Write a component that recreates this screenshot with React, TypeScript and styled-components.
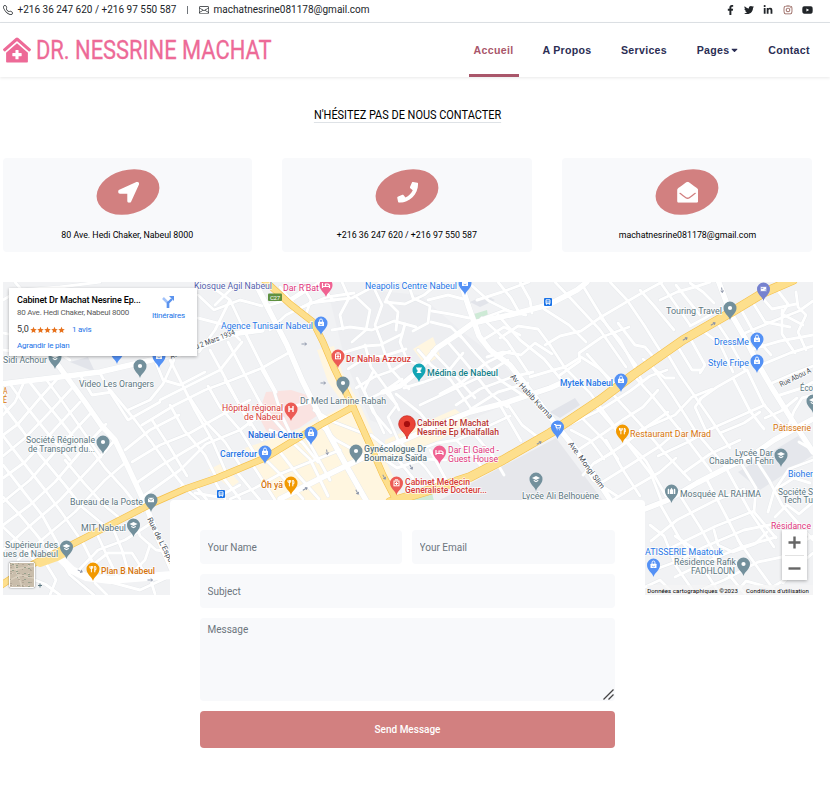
import React from 'react';
import styled, { createGlobalStyle } from 'styled-components';
import {
  FaClinicMedical, FaFacebookF, FaTwitter, FaLinkedinIn, FaInstagram, FaYoutube,
  FaLocationArrow, FaPhone, FaEnvelopeOpen, FaCaretDown,
} from 'react-icons/fa';
import { BsTelephone, BsEnvelope } from 'react-icons/bs';

const GlobalStyle = createGlobalStyle`
  * { box-sizing: border-box; }
  body { margin: 0; background: #fff; font-family: Roboto, sans-serif; color: #212529; overflow-x: hidden; }
`;

const Page = styled.div`
  width: 830px;
  height: 808px;
  overflow: hidden;
`;

const TopBar = styled.div`
  height: 23px;
  border-bottom: 1px solid #dee2e6;
  display: flex;
  align-items: center;
  justify-content: space-between;
  padding: 0 17px 3px 3px;
  font-size: 10px;
  line-height: 16px;
`;
const ContactLine = styled.div`
  display: flex;
  align-items: center;
  white-space: nowrap;
  svg { width: 10px; height: 10px; }
`;
const ContactText = styled.span<{ $w: number; $gap: number }>`
  width: ${p => p.$w}px;
  margin-left: ${p => p.$gap}px;
`;
const Divider = styled.span`
  width: 1px;
  height: 8px;
  background: #70757a;
  margin: 0 11px 0 10px;
`;
const Socials = styled.div`
  display: flex;
  align-items: center;
  gap: 9.5px;
  svg { height: 10px; width: 10px; display: block; }
  svg:first-child { width: 7px; }
  svg:last-child { width: 11px; }
  svg:nth-child(4) { color: #8a524a; }
`;

const NavBar = styled.header`
  height: 54px;
  display: flex;
  justify-content: space-between;
  padding-left: 3px;
  padding-right: 14.5px;
  box-shadow: 0 1px 3px rgba(0, 0, 0, 0.09);
`;
const Brand = styled.div`
  display: flex;
  align-items: center;
  color: #ed6a97;
  svg { width: 28px; height: 26px; flex: none; }
`;
const BrandName = styled.span`
  font-size: 26px;
  line-height: 32px;
  margin-left: 5px;
  white-space: nowrap;
  transform: scaleX(0.842);
  transform-origin: 0 50%;
  -webkit-text-stroke: 0.3px #ed6a97;
`;
const Nav = styled.nav`
  display: flex;
  gap: 19px;
`;
const NavItem = styled.a<{ $active?: boolean; $w: number }>`
  width: ${p => p.$w}px;
  display: flex;
  align-items: center;
  justify-content: center;
  gap: 2px;
  font: 700 10.6px 'Liberation Sans', sans-serif;
  letter-spacing: 0.3px;
  color: ${p => (p.$active ? '#a9566a' : '#2b2e54')};
  border-bottom: 3px solid ${p => (p.$active ? '#a9566a' : 'transparent')};
  padding-top: 3px;
  white-space: nowrap;
  svg { width: 7px; height: 10px; }
`;

const Title = styled.h1`
  margin: 29px 14px 0 0;
  display: flex;
  justify-content: center;
  font-weight: 400;
  color: #000;
  font-size: 12.8px;
  line-height: 17px;
  height: 52px;
`;
const TitleText = styled.span`
  display: inline-block;
  height: 17px;
  transform: scaleX(0.855);
  border-bottom: 1px solid #dee2e6;
  white-space: nowrap;
`;

const Main = styled.main`
  width: 813px;
  padding-left: 3px;
`;
const Cards = styled.div`
  display: grid;
  grid-template-columns: 249px 250px 250px;
  gap: 30px;
`;
const Card = styled.div`
  height: 94px;
  background: #f8f9fb;
  border-radius: 4px;
  display: flex;
  flex-direction: column;
  align-items: center;
  padding-top: 12px;
`;
const Blob = styled.div`
  width: 64px;
  height: 44px;
  border-radius: 50%;
  background: #d28080;
  transform: rotate(-15deg);
  display: flex;
  align-items: center;
  justify-content: center;
  color: #fff;
  svg { width: 21px; height: 21px; transform: rotate(15deg); }
`;
const CardText = styled.span`
  margin-top: 13px;
  font-size: 9.8px;
  line-height: 16px;
  color: #000;
  white-space: nowrap;
  transform: scaleX(0.9);
`;

const MapFrame = styled.div`
  position: relative;
  margin-top: 30px;
  width: 810px;
  height: 313px;
  overflow: hidden;
  & > svg { display: block; }
`;
const InfoCard = styled.div`
  position: absolute;
  left: 6px;
  top: 6px;
  width: 188px;
  height: 68px;
  background: #fff;
  box-shadow: 0 1px 3px rgba(0, 0, 0, 0.3);
  display: flex;
  justify-content: space-between;
  padding: 5px 12px 0 8px;
  white-space: nowrap;
`;
const InfoMain = styled.div`
  display: flex;
  flex-direction: column;
`;
const PlaceName = styled.div`
  font-size: 9px;
  line-height: 14px;
  color: #000;
  font-weight: 500;
  letter-spacing: -0.14px;
`;
const Address = styled.div`
  font-size: 8px;
  line-height: 11px;
  color: #5b5b5b;
  letter-spacing: -0.24px;
`;
const Rating = styled.div`
  display: flex;
  align-items: center;
  margin-top: 5px;
  font-size: 9px;
  line-height: 13px;
  color: #333;
`;
const Stars = styled.span`
  color: #e7711b;
  display: flex;
  margin: 0 7px 0 1px;
  svg { width: 7px; height: 8px; }
`;
const MapLink = styled.a`
  font-size: 8px;
  line-height: 11px;
  letter-spacing: -0.2px;
  color: #1a73e8;
`;
const Enlarge = styled(MapLink)`
  margin-top: 4px;
`;
const Directions = styled.div`
  display: flex;
  flex-direction: column;
  align-items: center;
  padding-top: 2px;
  svg { width: 14px; height: 14px; margin-bottom: 1px; }
`;
const Thumb = styled.div`
  position: absolute;
  left: 6px;
  bottom: 7px;
  width: 26px;
  height: 26px;
  border: 1.5px solid #fff;
  border-radius: 2px;
  box-shadow: 0 0 2px rgba(0, 0, 0, 0.5);
  overflow: hidden;
  background: #c4b8a5;
  svg { display: block; }
`;
const ZoomBox = styled.div`
  position: absolute;
  right: 6px;
  bottom: 15px;
  width: 25px;
  height: 50px;
  background: #fff;
  box-shadow: 0 1px 3px rgba(0, 0, 0, 0.3);
  display: flex;
  flex-direction: column;
  align-items: center;
  justify-content: center;
  gap: 6px;
  svg { width: 13px; height: 13px; }
`;
const ZoomLine = styled.div`
  width: 19px;
  height: 1px;
  background: #e2e2e2;
`;
const Credits = styled.div`
  position: absolute;
  right: 0;
  bottom: 0;
  height: 10px;
  display: flex;
  align-items: center;
  gap: 8px;
  padding-right: 4px;
  font-size: 6px;
  letter-spacing: 0.09px;
  color: #000;
  background: rgba(245, 245, 245, 0.7);
  white-space: nowrap;
`;

const Form = styled.form`
  position: relative;
  width: 475px;
  height: 278px;
  margin: -95px 0 0 167px;
  padding: 30px;
  background: #fff;
  border-radius: 4px;
  display: grid;
  grid-template-columns: 202px 203px;
  grid-template-rows: 34px 34px 83px 37px;
  gap: 10px;
`;
const Field = styled.input<{ $wide?: boolean }>`
  grid-column: ${p => (p.$wide ? '1 / -1' : 'auto')};
  width: 100%;
  border: 0;
  border-radius: 4px;
  background: #f8f9fb;
  padding: ${p => (p.$wide ? '1px 7.5px 0' : '0 7.5px')};
  font: 400 10px Roboto, sans-serif;
  &::placeholder { color: #6c757d; opacity: 1; }
`;
const MessageBox = styled.div`
  grid-column: 1 / -1;
  position: relative;
`;
const Message = styled.textarea`
  display: block;
  width: 100%;
  height: 83px;
  border: 0;
  border-radius: 4px;
  background: #f8f9fb;
  padding: 4px 7.5px;
  font: 400 10px/15px Roboto, sans-serif;
  resize: none;
  &::placeholder { color: #6c757d; opacity: 1; }
`;
const Grip = styled.svg`
  position: absolute;
  right: 1px;
  bottom: 1px;
`;
const Send = styled.button`
  grid-column: 1 / -1;
  border: 0;
  border-radius: 4px;
  background: #d28080;
  color: #fff;
  font: 500 10px Roboto, sans-serif;
`;

/* Streets, in the map's own coordinate space (x 3-813, y 282-595). */
const MAJOR = [
  '0,384 60,377 100,372 160,358 200,347 232,334 262,330',
  '53,358 66,376 85,402 101,425 115,440 128,467 147,508 158,538 172,570',
  '255,282 270,312 287,345 302,380 313,402 330,436 347,467 367,502',
  '460,280 468,305 479,336 490,350 510,365 532,393 557,426 575,448 600,484 618,512',
  '587,282 577,290 548,305 510,315 473,323 455,336 437,348 418,371 400,386 383,392',
  '718,280 730,312 745,338 757,362 772,388 792,420 813,452',
  '568,380 550,388 505,403 470,412 440,424 413,436 375,452 323,477 280,499',
  '645,509 668,500 697,483 730,466 750,457 774,440 813,419',
];
const MINOR = [
  '3,300 20,290 60,287 100,282', '3,350 25,352 55,359', '15,282 30,300 60,310', '3,333 40,340 70,360',
  '198,295 214,310 240,300 262,306', '205,282 230,300 246,334', '198,318 225,325 240,340', '240,282 228,292 215,305',
  '199,352 215,330 230,300', '170,360 195,410 212,440 225,470', '155,360 163,380 180,385 205,372', '160,400 196,382 220,370 242,342',
  '142,425 175,405 205,390 232,380 262,368 290,352', '210,350 222,372 250,425', '228,342 245,375 262,406 285,432',
  '245,332 262,366 276,392', '128,410 150,400 163,384 174,360', '100,373 112,395 128,420 160,402', '80,375 92,395 112,392',
  '3,415 15,402 25,380', '10,384 25,405 45,430 70,460', '28,380 42,398 60,420 85,452', '45,378 60,398 78,424 101,457',
  '3,435 18,424 40,398 58,378', '3,456 25,438 48,414 72,388', '3,478 25,462 54,430 80,402', '3,502 30,480 60,446 90,414',
  '3,525 30,505 55,482 82,450 106,424', '3,550 25,530 60,500 92,466 115,440', '18,560 45,537 75,512 105,480 125,463',
  '3,405 22,430 40,455 65,485 82,507 105,526', '3,436 20,458 45,490 62,513 78,536', '3,465 24,492 42,515 58,544',
  '3,497 20,515 36,534 50,552', '3,527 20,543 35,561', '65,460 84,483 105,506 122,520', '88,445 105,468 125,490 142,512',
  '40,562 56,544', '82,541 95,567 108,578', '96,532 109,560 119,580', '112,526 122,550 130,578', '75,574 98,550 125,540 150,524',
  '90,567 108,553 132,553 143,570', '134,518 140,536 156,550 170,552', '128,577 145,560 150,545', '3,584 25,576 45,584 60,595',
  '60,558 70,575 94,595', '45,562 56,580 50,595', '95,583 107,595', '150,578 155,594', '110,582 140,590 166,578',
  '110,390 135,420 150,440 175,475 187,490', '132,462 160,445 190,433 225,413 250,400', '145,495 180,470 206,444 240,430 265,411',
  '125,450 150,430 179,415', '135,484 162,465 187,450 210,437', '170,405 184,430 205,455 216,477', '190,398 205,421 225,442 240,465',
  '208,386 220,407 240,430 255,454', '152,420 169,446 187,476', '225,380 243,411 262,440', '262,370 274,391 280,410 310,402',
  '172,497 182,486 199,500', '196,487 207,500', '214,480 225,499', '222,476 240,499', '236,471 260,500', '252,464 275,500',
  '195,493 218,497 240,485', '230,499 255,488 280,474 320,458 340,450', '264,458 280,474 303,499', '280,452 297,474 319,499',
  '294,444 310,459 328,496', '306,437 330,480', '270,330 286,315 310,303 335,300', '280,287 298,309 327,297 354,293',
  '270,305 292,298 310,286', '287,303 306,291 320,282', '300,282 311,300 306,314', '318,283 333,300 352,298 367,290 382,282',
  '342,282 349,298 340,315 343,329', '355,296 370,310 366,330 352,342', '332,330 350,327 372,330 394,321 416,327',
  '373,286 382,305 375,325 382,343', '395,282 386,300 398,312 396,330', '385,302 405,304 424,295 440,282',
  '408,283 413,298 430,306 428,323 413,331', '428,300 448,295 463,299', '432,311 450,314 469,318', '431,322 451,327 461,337',
  '405,324 400,342 407,360 424,367', '342,353 365,346 380,345 402,334', '348,369 365,358 384,356 406,349', '356,388 374,377 391,371 409,360',
  '361,403 383,392 402,379', '365,345 371,367 390,393 399,410', '382,345 390,368 409,389', '373,372 364,390 373,412 391,433',
  '357,378 369,401 384,433', '384,390 397,405 388,417 398,440', '396,394 420,413 438,435', '404,388 424,382 446,374 463,353',
  '418,350 431,365 450,379 472,410', '432,351 449,369 475,398', '446,340 465,362 490,393 507,407', '459,334 476,354 500,380 524,396',
  '440,394 462,382 486,363 510,351', '420,405 452,390 482,376 508,360', '456,405 480,389 512,377 533,372', '471,409 498,392 528,383',
  '487,357 503,352 521,355 535,343 552,354', '500,338 518,326 538,329 550,345', '481,341 504,327 520,335', '481,319 505,310 526,315',
  '498,282 511,298 520,314', '520,282 530,300 532,313', '482,318 507,341 529,374', '498,315 520,340 544,359 563,382',
  '470,284 489,301 509,311', '477,300 502,292 529,282', '544,309 569,325 586,342', '555,282 575,303 600,330 626,367',
  '583,286 608,327 636,365', '560,375 580,361 579,353 602,337 629,327', '545,345 560,336 581,331 601,317 640,294 662,282',
  '530,377 550,371 565,367 581,357 600,369 618,390', '550,345 565,368 590,393 613,424', '587,354 602,371 620,389',
  '610,282 627,300 644,325 661,352', '640,290 655,307 674,330', '618,323 635,345 645,347 656,360', '600,317 620,340 642,381',
  '643,359 665,378 674,378', '660,282 674,302 690,325', '660,300 677,292 695,287 710,282', '676,285 687,299 700,315',
  '690,283 703,292 714,303', '690,326 705,318 719,309', '667,353 680,375 710,418 730,448', '678,347 692,370 702,370',
  '690,338 705,365 700,373', '702,330 720,344 733,372', '718,324 728,339 745,370', '738,304 758,340 771,355',
  '750,298 765,322 790,327', '758,293 772,309 796,304', '775,287 788,304 782,314 803,325', '745,333 771,322 799,311 813,301',
  '753,349 780,341 813,335', '761,365 790,353 813,346', '772,383 795,373 813,366', '780,395 802,388 813,382',
  '796,292 798,307 806,315 798,332 806,350', '782,310 782,334 795,353', '700,399 717,387 747,370', '701,399 695,407 706,431 740,416 765,405',
  '733,378 750,411 764,429', '747,370 764,405 787,430', '765,418 781,411 797,398', '787,430 794,411 802,398 813,395',
  '720,433 744,423 760,412', '658,456 688,442 713,428', '683,473 710,454 740,440', '640,430 675,415 692,397 712,389',
  '558,430 600,410 630,391 650,376 667,370', '580,416 603,439 618,459', '592,402 618,432 646,461 666,496',
  '609,390 641,425 662,450 690,480', '635,377 653,397 683,434 711,471', '650,364 671,393 696,432 725,466',
  '575,452 604,433 624,419 643,407 658,390', '595,463 620,447 648,426 668,412', '601,483 625,468 660,446 680,429',
  '613,500 636,486 660,472 676,458', '578,455 593,480 617,496', '606,440 623,470 640,496', '621,435 651,474 661,500',
  '571,430 590,440 604,459', '583,475 594,463 612,453', '660,504 680,539 692,555', '681,497 700,527 715,554',
  '707,480 725,514 742,547', '726,468 749,510 774,547', '741,463 756,488 754,512 776,538', '754,457 769,480 782,505 813,540',
  '651,541 677,520 714,501 744,489', '660,553 685,541 716,526 754,511', '651,571 678,561 704,547 744,530 774,524',
  '675,577 704,563 739,548 776,537', '691,594 724,580 758,562 782,557', '675,536 693,548 703,568 720,594',
  '711,553 730,576 745,594', '738,540 758,568 774,590', '714,530 718,545 733,552 755,544 767,532', '650,525 664,536 676,566 696,595',
  '775,517 787,505 799,514 813,502', '778,488 794,478 810,483', '768,512 774,491 789,469 813,460', '799,442 813,450',
  '782,557 797,545 813,536', '783,583 801,563 813,553', '645,587 660,580 675,595', '734,595 746,581 771,588 786,579',
  '475,435 493,456 504,475', '457,441 473,456 484,470', '430,450 450,487', '500,405 521,441', '507,403 522,425 539,438',
  '418,450 437,443 457,440 482,429 510,416', '375,453 397,468 424,459 446,460', '371,435 390,450 413,478', '400,442 425,467 439,486',
  '318,423 336,440 365,456', '270,430 302,442 318,462', '283,418 294,441', '314,410 334,422 365,434',
];
const YELLOW = [
  '0,586 33,564 67,547 110,525 151,504 185,489 217,478 265,458 288,444 320,425 353,407',
  '262,278 290,304 313,322 323,342 334,368 353,407 370,445 383,475 397,502',
  '390,502 430,490 470,477 503,460 550,433 570,420 600,400 633,375 683,340 730,313 763,293 793,280',
];

type Kind = 'dot' | 'bag' | 'med' | 'H' | 'bed' | 'fork' | 'school' | 'cart' | 'mail' | 'tower' | 'mosque' | 'card';
const BLUE = '#5491f5', SLATE = '#73909c', ORANGE = '#f29900', RED = '#ec5b55', PINK = '#f06292', TEAL = '#12a4b4';
const PINS: [number, number, string, Kind][] = [
  [326, 285, PINK, 'bed'], [465, 283, BLUE, 'bag'], [321, 323, BLUE, 'bag'], [338, 356, RED, 'med'], [343, 383, SLATE, 'dot'],
  [419, 370, TEAL, 'tower'], [291, 409, RED, 'H'], [311, 433, BLUE, 'bag'], [265, 452, BLUE, 'bag'], [356, 451, SLATE, 'dot'],
  [439.5, 452, PINK, 'bed'], [396.5, 483, RED, 'med'], [291, 483, ORANGE, 'fork'], [536, 479, SLATE, 'school'], [557.5, 427, BLUE, 'cart'],
  [621, 380, BLUE, 'bag'], [622.5, 431, ORANGE, 'fork'], [730, 308, SLATE, 'dot'], [763.5, 289, '#7581cf', 'card'], [757, 339, BLUE, 'bag'],
  [757, 361, BLUE, 'bag'], [813, 401, SLATE, 'school'], [781, 455, SLATE, 'school'], [671.5, 491, SLATE, 'mosque'], [743.5, 564, SLATE, 'dot'],
  [653.5, 565, BLUE, 'bag'], [140, 366, SLATE, 'dot'], [103, 442, SLATE, 'dot'], [151, 500, SLATE, 'mail'], [133.5, 525, SLATE, 'school'],
  [66.500, 547, SLATE, 'school'], [93, 569, ORANGE, 'fork'], [55, 357, SLATE, 'school'], [117, 352, BLUE, 'bag'], [159, 356, BLUE, 'bag'],
];

const Glyph = ({ kind }: { kind: Kind }) => {
  switch (kind) {
    case 'dot': return <circle r="2.1" fill="#fff" />;
    case 'bag': return <><rect x="-3" y="-1.2" width="6" height="4.3" rx=".5" fill="#fff" /><path d="M-1.4-1V-2.6a1.4 1.4 0 0 1 2.8 0V-1" fill="none" stroke="#fff" strokeWidth=".9" /><path d="M-1.2 .8a1.2 1 0 0 0 2.4 0" fill="none" stroke="#5491f5" strokeWidth=".7" /></>;
    case 'med': return <><rect x="-2.5" y="-2" width="5" height="4.8" fill="none" stroke="#fff" /><path d="M-1.6-3.2H1.6M0-1V2M-1.5.5H1.5" stroke="#fff" /></>;
    case 'H': return <path d="M-2-3V3M2-3V3M-2 0H2" stroke="#fff" strokeWidth="1.4" />;
    case 'bed': return <path d="M-3.5-2V3M-3.5 1.5H3.5M3.5 3V.3L2-1H-.5V1M-2-.4h.2" stroke="#fff" strokeWidth="1.2" fill="none" />;
    case 'fork': return <path d="M-1.6-3V3.3M-3-3V-.8H-.3V-3M1.8 3.3V-3C3-2 3.2-1 2.8.8H1.8" stroke="#fff" strokeWidth="1" fill="none" />;
    case 'school': return <path d="M-4-1L0-3 4-1 0 1ZM-2.3.8V2L0 3.2 2.3 2V.8L0 2Z" fill="#fff" />;
    case 'cart': return <path d="M-3.5-2.5H-2L-1 1H2.5L3.2-1.6H-1.7M-.7 2.7h.7M1.7 2.7h.7" stroke="#fff" fill="none" strokeWidth="1.1" />;
    case 'mail': return <><rect x="-3" y="-2.2" width="6" height="4.4" fill="#fff" /><path d="M-3-2L0 .4 3-2" stroke="#73909c" strokeWidth=".8" fill="none" /></>;
    case 'tower': return <path d="M-2.5-3H-1.5V-2H-.5V-3H.5V-2H1.5V-3H2.5V-.7L1.5 0V1.5L2.7 3H-2.7L-1.5 1.5V0L-2.5-.7Z" fill="#fff" />;
    case 'mosque': return <path d="M-3.8 3V-1.5L-3-2.5-2.2-1.5V3ZM-1.5 3V-1L0-3.3 1.5-1V3ZM2.2 3V-1.5L3-2.5 3.8-1.5V3Z" fill="#fff" />;
    case 'card': return <path d="M-3.2-2.4H3.2V2.4H-3.2ZM-2.2-.6H-.2M1.2.9H2.4" fill="#fff" stroke="#7581cf" strokeWidth=".8" />;
  }
};

const L_SLATE = '#5b7680', L_BLUE = '#2777e6', L_RED = '#d63a36', L_ORANGE = '#d6740b', L_PINK = '#e0357c', L_DARK = '#454c54';
/* text, left x, baseline y, drawn width, colour, weight */
const LABELS: [string, number, number, number, string, number?][] = [
  ['Kiosque Agil Nabeul', 194, 289, 78, '#5460ac'], ["Dar R'Bat", 283, 291, 36, L_PINK], ['Neapolis Centre Nabeul', 365, 289, 92, L_BLUE],
  ['Agence Tunisair Nabeul', 221, 329, 92, L_BLUE], ['Dr Nahla Azzouz', 346, 362, 65, L_RED, 500], ['Médina de Nabeul', 427, 376, 71, '#12808a', 500],
  ['Dr Med Lamine Rabah', 300, 404, 86, L_SLATE], ['Hôpital régional', 222, 411, 61, L_RED], ['de Nabeul', 244, 420, 39, L_RED],
  ['Nabeul Centre', 248, 438, 55, '#1565d8', 500], ['Carrefour', 220, 457, 37, L_BLUE, 500], ['Ôh yä', 261, 488, 22, L_ORANGE, 500],
  ['Cabinet Dr Machat', 417, 426, 72, '#b93431', 500], ['Nesrine Ep Khalfallah', 417, 435, 82, '#b93431', 500],
  ['Gynécologue Dr', 364, 452, 62, L_SLATE, 500], ['Boumaiza Saïda', 364, 461, 63, L_SLATE, 500],
  ['Dar El Gaïed -', 448, 453, 51, L_PINK], ['Guest House', 448, 461.5, 50, L_PINK],
  ['Cabinet Medecin', 405, 484.5, 65, L_RED, 500], ['Generaliste Docteur...', 405, 493, 82, L_RED, 500],
  ['Lycée Ali Belhouène', 522, 499, 77, L_SLATE], ['Mytek Nabeul', 560, 385.5, 53, L_BLUE, 500], ['Restaurant Dar Mrad', 630, 437, 81, L_ORANGE],
  ['Touring Travel', 666, 313.5, 56, L_SLATE], ['DressMe', 714, 345, 35, L_BLUE], ['Style Fripe', 708, 366, 41, L_BLUE],
  ['Éco', 800, 391, 13, L_SLATE], ['Pâtisserie', 773, 431, 38, L_ORANGE], ['Lycée Dar', 735, 455.5, 38, L_SLATE], ['Chaaben el Fehri', 709, 464, 65, L_SLATE],
  ['Bioher', 788, 477, 25, L_BLUE], ['Mosquée AL RAHMA', 680, 496.5, 81, L_SLATE], ['Société S', 778, 494.5, 35, L_SLATE], ['Tech Tu', 783, 503, 30, L_SLATE],
  ['Résidance', 771, 529, 40, L_PINK], ['ATISSERIE Maatouk', 645, 554.5, 78, L_BLUE], ['Résidence Rafik', 674, 565, 62, L_SLATE], ['FADHLOUN', 691, 574, 44, L_SLATE],
  ['Sidi Achour', 3, 362.5, 44, L_SLATE], ['Video Les Orangers', 79, 387, 75, L_SLATE], ['Société Régionale', 26, 443, 69, L_SLATE], ['de Transport du...', 28, 452, 67, L_SLATE],
  ['Bureau de la Poste', 70, 505, 73, L_SLATE], ['MIT Nabeul', 81, 530.5, 45, L_SLATE], ['Supérieur des', 5, 548, 53, L_SLATE], ['ues de Nabeul', 3, 557, 55, L_SLATE],
  ['Plan B Nabeul', 101, 574, 54, L_ORANGE, 500], ['A', 3, 394, 4.5, L_ORANGE], ['É', 3, 403, 4, L_ORANGE],
];
/* road names follow their street: text, x, y, width, rotation */
const ROAD_NAMES: [string, number, number, number, number][] = [
  ['Avenue du 2 Mars 1934', 171, 359, 69, -21], ['Av. Habib Karma', 510, 377, 58, 47], ['Ave. Mongi Slim', 568, 444, 56, 54],
  ["Rue de L'Espoir", 147, 519, 54, 63], ['Rue Abou A', 781, 387, 34, -26],
];

const ONE_WAY: [number, number, number][] = [
  [304, 344, 0], [323, 383, 0], [327, 452, 80], [305, 489, -30], [411, 467, 60], [384, 477, 60], [357, 492, 60],
  [685, 339, -30], [713, 324, -30], [722, 290, 80], [539, 443, -30], [80, 571, 25], [150, 580, 0],
];

const CityMap = () => (
  <svg width="810" height="313" viewBox="3 282 810 313">
    <rect x="3" y="282" width="810" height="313" fill="#f1f2f4" />
    <path d="M330 300L370 290 420 295 460 330 500 360 530 395 420 440 370 420 345 360Z" fill="#edeef1" />
    <path d="M440 500L505 465 556 438 610 510V560H400Z" fill="#e6e7eb" />
    <path d="M738 472L798 436 813 455 760 490Z" fill="#e5e7ec" />
    <path d="M70 362L95 372 88 357ZM470 302L485 295 495 300 480 307ZM550 412L575 398 580 405 560 418Z" fill="#e2e4ea" />
    <path d="M266 392L291 390 310 396 318 415 299 428 270 438 258 415Z" fill="#fae3e1" />
    <path d="M317 350L334 346 342 372 360 405 404 500H275L245 448 297 430 345 406 328 382Z" fill="#fff6e0" />
    <path d="M385 440L455 409 470 420 440 440 385 462ZM413 349L433 337 440 356 425 365ZM208 470L222 463 239 482 230 488Z" fill="#fff6e0" />
    <path d="M474 314L487 310 488 316 476 320ZM410 498L432 493 434 501H405Z" fill="#ceead6" />
    <g fill="none" strokeLinejoin="round" strokeLinecap="round">
      <g stroke="#e4e7ea" strokeWidth="3.6">{MINOR.map((p, i) => <polyline key={i} points={p} />)}</g>
      <g stroke="#e4e7ea" strokeWidth="6.2">{MAJOR.map((p, i) => <polyline key={i} points={p} />)}</g>
      <g stroke="#fff" strokeWidth="2.9">{MINOR.map((p, i) => <polyline key={i} points={p} />)}</g>
      <g stroke="#fff" strokeWidth="5.5">{MAJOR.map((p, i) => <polyline key={i} points={p} />)}</g>
      <polyline points="58,556 72,570 86,577 110,580 172,575" stroke="#fff" strokeWidth="8" />
      <g stroke="#f5c04a" strokeWidth="6.9">{YELLOW.slice(0, 2).map((p, i) => <polyline key={i} points={p} />)}</g>
      <polyline points={YELLOW[2]} stroke="#f5c04a" strokeWidth="9.4" />
      <g stroke="#fddf8d" strokeWidth="5.7">{YELLOW.slice(0, 2).map((p, i) => <polyline key={i} points={p} />)}</g>
      <polyline points={YELLOW[2]} stroke="#fddf8d" strokeWidth="8.2" />
      <polyline points="40,563 57,557 66,552" stroke="#fddf8d" strokeWidth="8" />
    </g>
    <g stroke="#8b94a8" strokeWidth=".9" fill="none">
      {ONE_WAY.map(([x, y, a], i) => <path key={i} transform={`translate(${x} ${y}) rotate(${a})`} d="M-2.5 0H2.5M.7-1.5L2.5 0 .7 1.5" />)}
    </g>
    <rect x="268" y="293.500" width="14" height="7.500" rx="1" fill="#5f9140" />
    <g fontFamily="Roboto, sans-serif" fontSize="8.7">
      <text x="270" y="300" fontSize="6" fill="#fff" textLength="10">C27</text>
      {ROAD_NAMES.map(([t, x, y, w, a]) => (
        <text key={t} transform={`translate(${x} ${y}) rotate(${a})`} textLength={w} lengthAdjust="spacingAndGlyphs"
          fontSize="7.600" fill={L_DARK} stroke="#fff" strokeWidth="1.6" paintOrder="stroke">{t}</text>
      ))}
      {LABELS.map(([t, x, y, w, c, weight]) => (
        <text key={t} x={x} y={y} fill={c} fontWeight={weight ?? 400} textLength={w} lengthAdjust="spacingAndGlyphs"
          stroke="#fff" strokeOpacity=".85" strokeWidth="1.6" paintOrder="stroke">{t}</text>
      ))}
    </g>
    {[[548, 302], [221, 494]].map(([x, y]) => (
      <g key={x} transform={`translate(${x} ${y})`}>
        <rect x="-4" y="-4" width="8" height="8" rx="1" fill="#1a73e8" />
        <path d="M-2-2.200H2V1.600H-2ZM-2 0H2M-1.500 1.600V2.700M1.500 1.600V2.700" stroke="#fff" strokeWidth=".9" fill="none" />
      </g>
    ))}
    {PINS.map(([x, y, c, k], i) => (
      <g key={i} transform={`translate(${x} ${y})`}>
        <path d="M0 12C-1 7.500-6.500 5.500-6.500 0a6.500 6.500 0 0 1 13 0C6.500 5.500 1 7.500 0 12Z" fill={c} />
        <Glyph kind={k} />
      </g>
    ))}
    <g transform="translate(407 424)">
      <path d="M0 15C-1.500 8-8.300 6-8.300 0a8.300 8.300 0 0 1 16.600 0C8.300 6 1.500 8 0 15Z" fill="#ea4335" stroke="#c5221f" strokeWidth=".7" />
      <circle r="3.100" fill="#a50e0e" />
    </g>
    <path d="M38 585.500H42M40 583.500V587.500" stroke="#5b7680" />
  </svg>
);

const Star = () => (
  <svg viewBox="0 0 24 24"><path fill="currentColor" d="M12 1l3.200 7.300 7.900.7-6 5.300 1.800 7.800L12 18l-6.900 4.100 1.800-7.800-6-5.300 7.900-.7z" /></svg>
);

const Aerial = () => (
  <svg width="24" height="24" viewBox="0 0 24 24">
    <rect width="24" height="24" fill="#c9bdab" />
    <path d="M0 7L24 3M4 0L12 24M0 17L10 12 24 15" stroke="#d9cebd" strokeWidth="1.500" fill="none" />
    {Array.from({ length: 70 }, (_, i) => (
      <rect key={i} x={(i * i * 7 + i * 5) % 24} y={(i * 11 + ((i * i) >> 3)) % 24} width={1 + (i % 2)} height="1" fill={['#aaa492', '#b3a797', '#dcd2c4', '#97a08b'][i % 4]} />
    ))}
  </svg>
);

export default function App() {
  return (
    <Page>
      <GlobalStyle />
      <TopBar>
        <ContactLine>
          <BsTelephone />
          <ContactText $w={159} $gap={4.5}>+216 36 247 620 / +216 97 550 587</ContactText>
          <Divider />
          <BsEnvelope />
          <ContactText $w={156} $gap={5}>machatnesrine081178@gmail.com</ContactText>
        </ContactLine>
        <Socials><FaFacebookF /><FaTwitter /><FaLinkedinIn /><FaInstagram /><FaYoutube /></Socials>
      </TopBar>
      <NavBar>
        <Brand><FaClinicMedical /><BrandName>DR. NESSRINE MACHAT</BrandName></Brand>
        <Nav>
          <NavItem $w={50} $active>Accueil</NavItem>
          <NavItem $w={59}>A Propos</NavItem>
          <NavItem $w={57}>Services</NavItem>
          <NavItem $w={52}>Pages<FaCaretDown /></NavItem>
          <NavItem $w={53}>Contact</NavItem>
        </Nav>
      </NavBar>
      <Title><TitleText>N'HÉSITEZ PAS DE NOUS CONTACTER</TitleText></Title>
      <Main>
        <Cards>
          <Card><Blob><FaLocationArrow /></Blob><CardText>80 Ave. Hedi Chaker, Nabeul 8000</CardText></Card>
          <Card><Blob><FaPhone /></Blob><CardText>+216 36 247 620 / +216 97 550 587</CardText></Card>
          <Card><Blob><FaEnvelopeOpen /></Blob><CardText>machatnesrine081178@gmail.com</CardText></Card>
        </Cards>
        <MapFrame>
          <CityMap />
          <InfoCard>
            <InfoMain>
              <PlaceName>Cabinet Dr Machat Nesrine Ep...</PlaceName>
              <Address>80 Ave. Hedi Chaker, Nabeul 8000</Address>
              <Rating>5,0<Stars><Star /><Star /><Star /><Star /><Star /></Stars><MapLink>1 avis</MapLink></Rating>
              <Enlarge>Agrandir le plan</Enlarge>
            </InfoMain>
            <Directions>
              <svg viewBox="0 0 14 14" fill="none">
                <path d="M2 3L7 8V13" stroke="#a1c2fa" strokeWidth="2.600" />
                <path d="M7 13V8L11 4" stroke="#5b93ee" strokeWidth="2.400" />
                <path d="M8 1H13V6Z" fill="#5b93ee" />
              </svg>
              <MapLink>Itinéraires</MapLink>
            </Directions>
          </InfoCard>
          <Thumb><Aerial /></Thumb>
          <ZoomBox>
            <svg viewBox="0 0 13 13"><path d="M6.500.5V12.500M.5 6.500H12.500" stroke="#666" strokeWidth="2.400" /></svg>
            <ZoomLine />
            <svg viewBox="0 0 13 13"><path d="M.5 6.500H12.500" stroke="#666" strokeWidth="2.400" /></svg>
          </ZoomBox>
          <Credits><span>Données cartographiques ©2023</span><span>Conditions d'utilisation</span></Credits>
        </MapFrame>
        <Form>
          <Field placeholder="Your Name" />
          <Field placeholder="Your Email" />
          <Field placeholder="Subject" $wide />
          <MessageBox>
            <Message placeholder="Message" />
            <Grip width="11" height="11" viewBox="0 0 11 11"><path d="M.5 10.500L10.500.5M5.500 10.500L10.500 5.500" stroke="#444" strokeWidth="1.300" /></Grip>
          </MessageBox>
          <Send type="button">Send Message</Send>
        </Form>
      </Main>
    </Page>
  );
}
